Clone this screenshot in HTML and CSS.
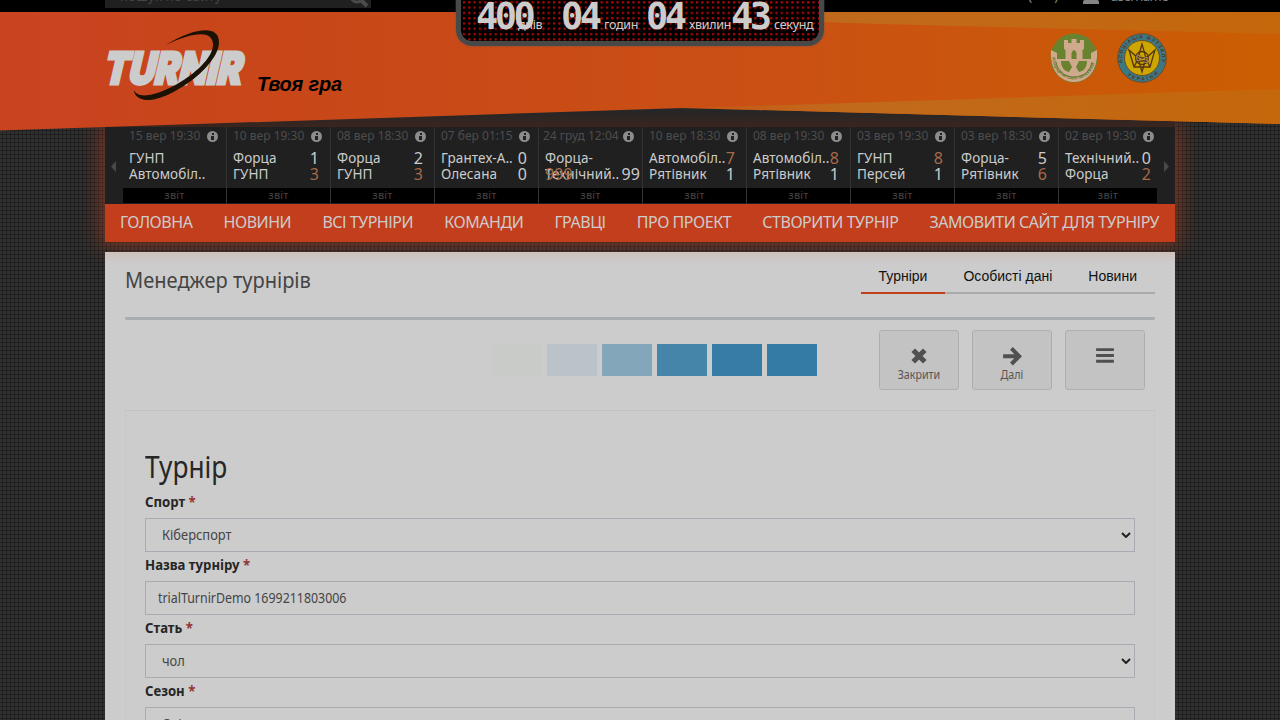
FILE: index.html
```
<!DOCTYPE html>
<html lang="uk">
<head>
<meta charset="utf-8">
<title>Турнір</title>
<link rel="stylesheet" href="styles.css">
</head>
<body>
<div class="topbar">
  <div class="topbar-in">
    <div class="search"><span>пошук по сайту</span>
      <svg width="22" height="20" viewBox="0 0 22 20"><circle cx="9" cy="7" r="6" fill="none" stroke="#4a4a4a" stroke-width="3"/><path d="M13 11l6 6" stroke="#4a4a4a" stroke-width="4"/></svg>
    </div>
    <div class="user"><span class="lang">( &nbsp; )</span><i></i><span>username</span></div>
  </div>
</div>
<header class="hero">
  <svg class="flag" width="1280" height="119" viewBox="0 12 1280 119">
    <defs>
      <linearGradient id="base"><stop offset="0" stop-color="#c94321"/><stop offset=".2" stop-color="#c84619"/><stop offset=".6" stop-color="#ca5014"/><stop offset="1" stop-color="#cb5e02"/></linearGradient>
      <linearGradient id="strip" gradientUnits="userSpaceOnUse" x1="660" y1="0" x2="1280" y2="0"><stop offset="0" stop-color="#c06a1c" stop-opacity=".15"/><stop offset=".3" stop-color="#c06a1c"/><stop offset="1" stop-color="#c5670b"/></linearGradient>
      <path id="arcTop" d="M1122.500 63a20 20 0 1 1 39 0"/>
      <path id="arcBot" d="M1119.500 58a22.500 22.500 0 0 0 45 0"/>
      <path id="arcGreen" d="M1052.500 57a21.500 22.500 0 0 0 43 0"/>
    </defs>
    <path d="M0 12H1280V124L683 108L0 130.500Z" fill="url(#base)"/>
    <path d="M820 12H1280V34L880 24L820 22Z" fill="url(#strip)"/>
    <path d="M670 108.500L880 102L1280 89V124L683 108Z" fill="url(#strip)"/>
    <g transform="translate(102 84.300) skewX(-13)"><text class="logo" textLength="138" lengthAdjust="spacingAndGlyphs">TURNIR</text></g>
    <path d="M166 45C195 27 219 25 219 42C219 67 168 102 146 100C138 99 134 95 134 90C142 110 214 70 213 44C212 30 193 32 166 45Z" fill="#1c1203"/>
    <text x="257" y="91" class="slogan" textLength="85">Твоя гра</text>
    <g>
      <ellipse cx="1074" cy="58" rx="23.500" ry="24.500" fill="#68822f"/>
      <path d="M1064 40h4v3h3.500v-4h5v4h3.500v-3h4v9l-1.500 1V59h-17V50l-1.500-1zM1051 50l6 3v6h34v-6l6-3c1 14-4 31-23 32c-19-1-24-18-23-32z" fill="#cfa98b"/>
      <path d="M1071.500 59v-6q2.500-6 5 0v6z" fill="#68822f"/>
      <path d="M1061 61h8l3 6-3 5c-5-1-8-5-8-11zM1087 61h-8l-3 6 3 5c5-1 8-5 8-11z" fill="#68822f"/>
      <path d="M1056 62c2 10 9 15 18 15s16-5 18-15" fill="none" stroke="#68822f"/>
      <text class="crest-g"><textPath href="#arcGreen" textLength="62">АСОЦІАЦІЯ ФУТЗАЛУ ТЕРНОПІЛЛЯ</textPath></text>
    </g>
    <g>
      <circle cx="1142" cy="58" r="24.300" fill="#3b7886" stroke="#6c4a25"/>
      <circle cx="1142" cy="58" r="17.500" fill="#cda600" stroke="#6c4a25"/>
      <g fill="none" stroke="#563511" stroke-width="1.300"><path d="M1142 44l-4 14 4 14 4-14zM1129 50l5 17h16l5-17-9 8h-8zM1134 67l3-6h10l3 6"/><circle cx="1142" cy="58" r="6.500"/></g>
      <text x="1135.500" y="61" class="ss">S</text><text x="1143" y="63" class="ss">S</text>
      <text class="crest"><textPath href="#arcTop" textLength="70">АСОЦІАЦІЯ ФУТЗАЛУ</textPath></text>
      <text class="crest"><textPath href="#arcBot" startOffset="19" textLength="34">УКРАЇНИ</textPath></text>
    </g>
  </svg>
  <div class="timer">
    <div class="unit"><b>400</b><span class="days">днів</span></div>
    <div class="unit"><b>04</b><span>годин</span></div>
    <div class="unit"><b>04</b><span>хвилин</span></div>
    <div class="unit"><b>43</b><span>секунд</span></div>
  </div>
</header>
<div class="panel">
  <div class="ticker">
    <svg class="arr" width="18" height="77"><path d="M11 34v11l-5-5.500z" fill="#484848"/></svg>
    <div class="games">
      <div class="g"><p class="d"><span>15 вер 19:30</span><i></i></p><p class="t">ГУНП</p><p class="t">Автомобіл..</p><p class="r">звіт</p></div>
      <div class="g"><p class="d"><span>10 вер 19:30</span><i></i></p><p class="t">Форца<b>1</b></p><p class="t">ГУНП<b class="w">3</b></p><p class="r">звіт</p></div>
      <div class="g"><p class="d"><span>08 вер 18:30</span><i></i></p><p class="t">Форца<b>2</b></p><p class="t">ГУНП<b class="w">3</b></p><p class="r">звіт</p></div>
      <div class="g"><p class="d"><span>07 бер 01:15</span><i></i></p><p class="t">Грантех-А..<b>0</b></p><p class="t">Олесана<b>0</b></p><p class="r">звіт</p></div>
      <div class="g"><p class="d"><span class="long">24 груд 12:04</span><i></i></p><p class="t">Форца-</p><p class="t"><em>999</em>Технічний..<b class="wide">99</b></p><p class="r">звіт</p></div>
      <div class="g"><p class="d"><span>10 вер 18:30</span><i></i></p><p class="t">Автомобіл..<b class="w">7</b></p><p class="t">Рятівник<b>1</b></p><p class="r">звіт</p></div>
      <div class="g"><p class="d"><span>08 вер 19:30</span><i></i></p><p class="t">Автомобіл..<b class="w">8</b></p><p class="t">Рятівник<b>1</b></p><p class="r">звіт</p></div>
      <div class="g"><p class="d"><span>03 вер 19:30</span><i></i></p><p class="t">ГУНП<b class="w">8</b></p><p class="t">Персей<b>1</b></p><p class="r">звіт</p></div>
      <div class="g"><p class="d"><span>03 вер 18:30</span><i></i></p><p class="t">Форца-<b>5</b></p><p class="t">Рятівник<b class="w">6</b></p><p class="r">звіт</p></div>
      <div class="g"><p class="d"><span>02 вер 19:30</span><i></i></p><p class="t">Технічний..<b>0</b></p><p class="t">Форца<b class="w">2</b></p><p class="r">звіт</p></div>
    </div>
    <svg class="arr" width="18" height="77"><path d="M7 34v11l5-5.500z" fill="#484848"/></svg>
  </div>
  <nav class="nav"><a>ГОЛОВНА</a><a>НОВИНИ</a><a>ВСІ ТУРНІРИ</a><a>КОМАНДИ</a><a>ГРАВЦІ</a><a>ПРО ПРОЕКТ</a><a>СТВОРИТИ ТУРНІР</a><a>ЗАМОВИТИ САЙТ ДЛЯ ТУРНІРУ</a></nav>
</div>
<main class="content">
  <div class="head"><h1>Менеджер турнірів</h1><div class="tabs"><a class="on">Турніри</a><a>Особисті дані</a><a>Новини</a></div></div>
  <div class="tools">
    <div class="steps"><i></i><i></i><i></i><i></i><i></i><i></i></div>
    <div class="btns">
      <button><svg width="20" height="20" viewBox="0 0 18 18"><path d="M3.800 3.800l10.400 10.400M14.200 3.800L3.800 14.200" stroke="#505050" stroke-width="4.600"/></svg><span>Закрити</span></button>
      <button><svg width="20" height="20" viewBox="0 0 18 18"><path d="M1 9.200h13M8.500 2.200l7 7-7 7" fill="none" stroke="#505050" stroke-width="3.600"/></svg><span>Далі</span></button>
      <button><svg width="20" height="20" viewBox="0 0 18 18"><path d="M1 3.300h16M1 8.500h16M1 13.700h16" stroke="#505050" stroke-width="2.600"/></svg><span></span></button>
    </div>
  </div>
  <div class="form">
    <h2>Турнір</h2>
    <label>Спорт <em>*</em></label><div class="field sel"><span>Кіберспорт</span><svg width="10" height="6"><path d="M1 1l4 4 4-4" fill="none" stroke="#222" stroke-width="2"/></svg></div>
    <label>Назва турніру <em>*</em></label><div class="field"><span class="latin">trialTurnirDemo 1699211803006</span></div>
    <label>Стать <em>*</em></label><div class="field sel"><span>чол</span><svg width="10" height="6"><path d="M1 1l4 4 4-4" fill="none" stroke="#222" stroke-width="2"/></svg></div>
    <label>Сезон <em>*</em></label><div class="field sel"><span>Осінь</span></div>
  </div>
</main>
</body>
</html>
```
FILE: styles.css
```
* { box-sizing: border-box; }
html, body { height: 720px; overflow: hidden; }
body {
  margin: 0; font-family: "Noto Sans", sans-serif; color: #444;
  background-color: #303030;
  background-image: linear-gradient(#1f1f1f 1px, transparent 1px), linear-gradient(90deg, #1f1f1f 1px, transparent 1px);
  background-size: 4px 4px; background-position: 2px 2px;
}
p, h1, h2 { margin: 0; font-weight: 400; }
.topbar { height: 12px; background: #000; overflow: hidden; }
.topbar-in { width: 1070px; margin: 0 auto; display: flex; justify-content: space-between; }
.search { width: 266px; height: 8px; background: #202020; overflow: hidden; display: flex; justify-content: space-between; color: #454545; font-size: 13px; line-height: 16px; padding: 0 1px 0 15px; }
.search span { margin-top: -12px; letter-spacing: .3px; }
.search svg { margin-top: -11px; flex: none; }
.user { display: flex; color: #858585; font-size: 13px; line-height: 16px; padding-right: 7px; }
.user span { margin-top: -12px; letter-spacing: -.5px; }
.user .lang { margin-right: 22px; letter-spacing: 3px; }
.user i { width: 16px; height: 4px; background: #858585; border-radius: 2px 2px 0 0; margin-right: 11px; }
.hero { height: 115px; position: relative; background: linear-gradient(#262828 90px, #272626 100px, #3a251e 115px) 105px 0 / 1070px 115px no-repeat; z-index: 2; }
.flag { display: block; }
.logo { font: 900 44px Inter, sans-serif; fill: #ccc; stroke: #ccc; stroke-width: 3px; }
.slogan { font: italic bold 20px "Liberation Sans", sans-serif; fill: #000; }
.crest { font: bold 5px "Liberation Sans", sans-serif; fill: #56341a; }
.crest-g { font: bold 4px "Liberation Sans", sans-serif; fill: #5e7530; }
.ss { font: bold 9px "Liberation Sans", sans-serif; fill: #d8c0a0; stroke: #563511; stroke-width: .4px; }
.timer {
  position: absolute; left: 456px; top: -22px; width: 368px; height: 56px; border: 5px solid #484848; border-radius: 0 0 16px 16px;
  background: radial-gradient(circle at 2px 2px, #a80808 .9px, #000 1.600px) 1px 0 / 5.300px 5.300px; display: flex; padding: 0 0 0 15px;
  box-shadow: 0 0 2px #5a5a5a;
}
.unit { width: 85px; position: relative; color: #ccc; }
.unit b { position: absolute; left: 0; top: 3px; font: bold 37px/37px "DejaVu Sans Mono", monospace; letter-spacing: -3.500px; }
.unit span { position: absolute; left: 43px; top: 21px; font-size: 12.500px; line-height: 18px; letter-spacing: -.3px; }
.unit .days { left: 42px; }
.panel { width: 1070px; margin: 0 auto; height: 115px; box-shadow: 0 0 20px 4px rgba(200,66,30,.5); position: relative; }
.ticker { height: 77px; background: #202020; display: flex; }
.arr { flex: none; display: block; }
.games { width: 1034px; display: flex; }
.g { width: 104px; flex: none; border-right: 1px solid #333; }
.g:last-child { width: 98px; border: 0; }
.d { height: 23px; padding: 2px 0 0 6px; display: flex; font-size: 12px; line-height: 14px; color: #4d4d4d; white-space: nowrap; }
.d span { width: 78px; }
.d .long { margin-left: -2px; width: 80px; }
.d i { width: 11px; height: 11px; margin-top: 2px; border-radius: 50%; background: linear-gradient(#222,#222) 50% 2px / 2px 2px no-repeat, linear-gradient(#222,#222) 50% 5px / 3px 4px no-repeat, #8c8c8c; }
.t { height: 16px; padding-left: 6px; font-size: 13.500px; line-height: 17px; letter-spacing: .1px; color: #ccc; position: relative; white-space: nowrap; }
.t b { position: absolute; right: 11px; top: 0; font-weight: 400; font-size: 16px; }
.g:last-child .t b { right: 6px; }
.g .t b.wide { right: 2px; }
.t b.w, .t em { color: #a66a4b; }
.t em { position: absolute; font-style: normal; font-size: 16px; }
.r { margin-top: 6px; height: 15px; background: #000; text-align: center; color: #444; font-size: 11px; line-height: 14px; letter-spacing: .2px; }
.nav { height: 38px; background: #c33e1c; display: flex; justify-content: space-between; padding: 0 16px 0 15px; font-size: 16px; line-height: 37px; letter-spacing: -.47px; color: #ccc; white-space: nowrap; }
.content { width: 1070px; height: 468px; margin: 10px auto 0; padding: 0 20px; background: linear-gradient(#cfc0bb, #cccccc 12px); position: relative; }
.head { height: 68px; border-bottom: 3px solid #a8acb3; border-radius: 0 0 2px 2px; display: flex; justify-content: space-between; }
.head h1 { font-size: 22px; line-height: 54px; transform: scaleX(.912); transform-origin: 0 0; }
.tabs { display: flex; margin-top: 8px; height: 34px; font: 14px/32px "Liberation Sans", sans-serif; color: #111; border-bottom: 2px solid #aaa; }
.tabs a { padding: 0 18px; height: 34px; }
.tabs .on { border-bottom: 2px solid #c33e1c; }
.tools { height: 91px; border-bottom: 1px solid #c2c2c2; display: flex; justify-content: flex-end; padding: 10px 10px 0 0; }
.steps { display: flex; gap: 5px; margin: 14px 62px 0 0; }
.steps i { width: 50px; height: 32px; background: #347ca6; }
.steps i:nth-child(1) { background: #c9cbc9; }
.steps i:nth-child(2) { background: #bac3c7; }
.steps i:nth-child(3) { background: #83a6ba; }
.steps i:nth-child(4) { background: #4685aa; }
.steps i:nth-child(5) { background: #377ba7; }
.btns { display: flex; gap: 13px; }
.btns button { width: 80px; height: 60px; border: 1px solid #aeaeae; border-radius: 3px; background: #c3c3c3; padding: 15px 0 0; display: flex; flex-direction: column; align-items: center; color: #555; font: 12px/18px "Noto Sans", sans-serif; }
.btns svg { flex: none; }
.btns span { transform: scaleX(.89); }
.form { padding: 33px 19px 0; border: 1px solid #c8c8c8; border-width: 0 1px; }
h2 { font-size: 30px; line-height: 46px; color: #262626; height: 47px; transform: scaleX(.875); transform-origin: 0 0; }
label { display: block; height: 27px; font-size: 14px; line-height: 21px; font-weight: 700; color: #262626; transform: scaleX(.94); transform-origin: 0 0; }
label em { color: #943535; font-style: normal; }
.field { height: 34px; margin-bottom: 2px; border: 1px solid #a8abb2; padding: 0 12px; font-size: 14px; line-height: 32px; display: flex; align-items: center; justify-content: space-between; color: #444; }
.field span { transform: scaleX(.92); transform-origin: 0 0; }
.field .latin { transform: scaleX(.885); }
.sel { padding: 0 3px 0 16px; }
```
